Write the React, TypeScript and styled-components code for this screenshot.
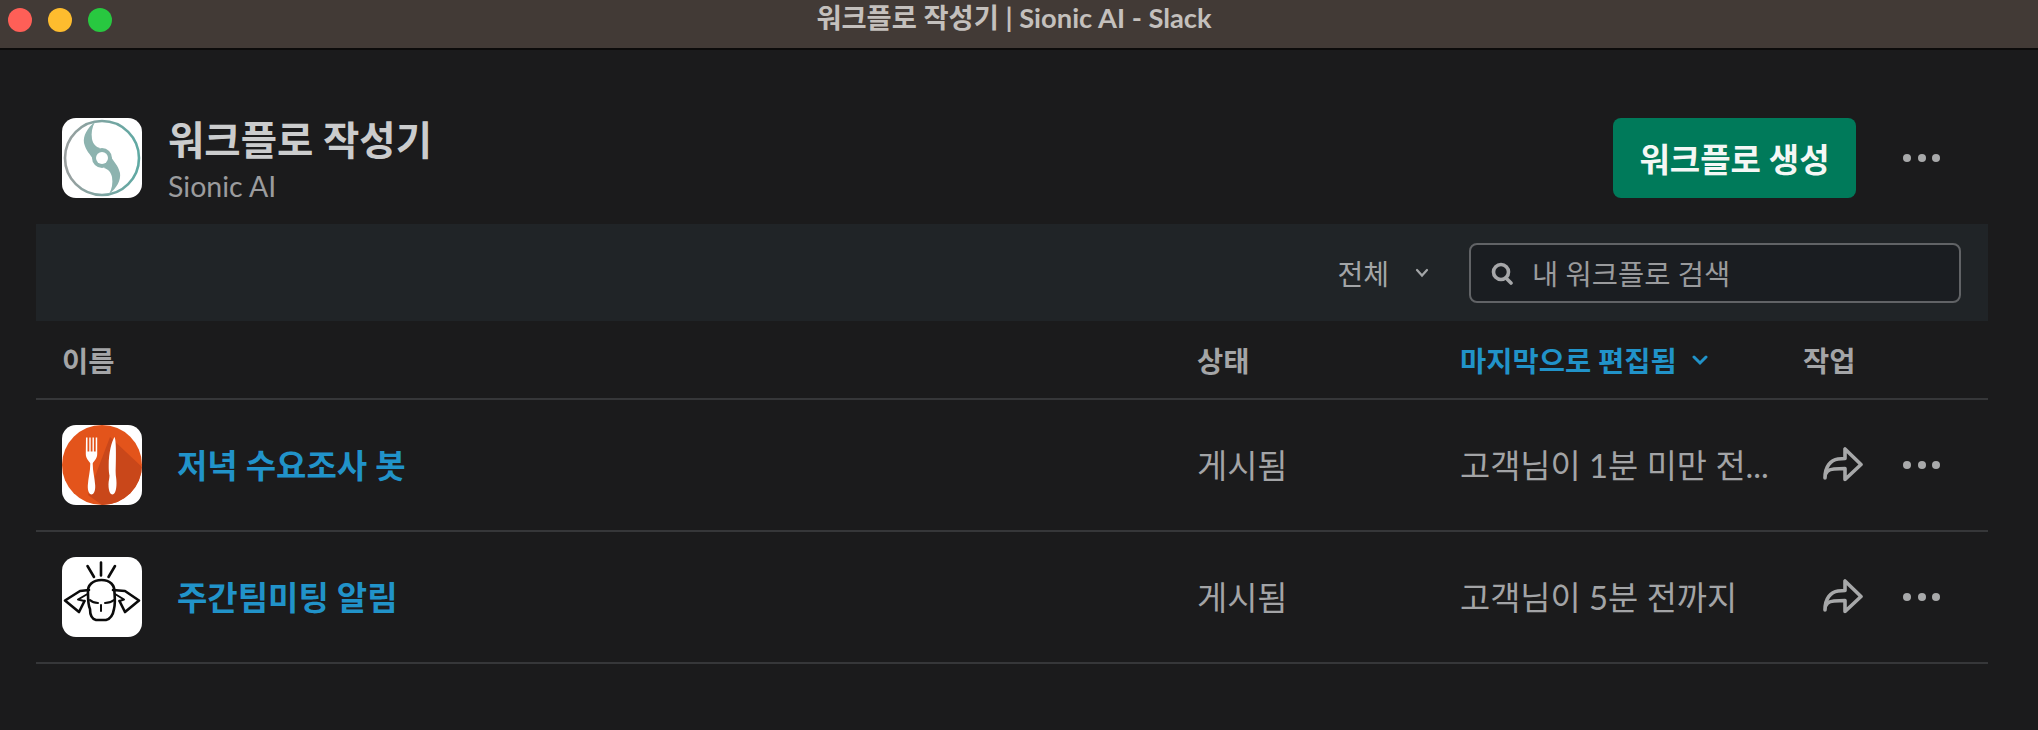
import React from "react";
import styled, { createGlobalStyle } from "styled-components";

const FONT = `Lato, "Noto Sans CJK KR", "Noto Sans", sans-serif`;

const Global = createGlobalStyle`
  html, body { margin: 0; padding: 0; background: #1b1b1c; }
  body { font-family: ${FONT}; width: 2038px; height: 730px; overflow: hidden; }
`;

const Window = styled.div`
  width: 2038px;
  height: 730px;
  display: flex;
  flex-direction: column;
  background: #1b1b1c;
`;

const TitleBar = styled.header`
  flex: none;
  display: grid;
  grid-template-columns: 1fr auto 1fr;
  align-items: center;
  padding: 0 18px 8px 8px;
  height: 40px;
  background: #423a36;
  border-bottom: 2px solid #0c0b0b;
`;

const Lights = styled.div`
  display: flex;
  gap: 16px;
`;

const Light = styled.span<{ $c: string }>`
  width: 24px;
  height: 24px;
  border-radius: 50%;
  background: ${(p) => p.$c};
`;

const WindowTitle = styled.div`
  font-size: 27.3px;
  font-weight: 700;
  color: #c4c0bd;
  line-height: 36px;
  margin-bottom: 4px;
`;

const Content = styled.main`
  padding: 68px 50px 0 36px;
  display: flex;
  flex-direction: column;
`;

const Top = styled.section`
  display: flex;
  align-items: center;
  height: 80px;
  padding: 0 0 26px 26px;
`;

const TitleBlock = styled.div`
  margin-left: 26px;
  padding-top: 7px;
  flex: 1;
  display: flex;
  flex-direction: column;
`;

const AppTitle = styled.h1`
  margin: 0;
  font-size: 39.5px;
  line-height: 44px;
  font-weight: 700;
  color: #cbcccd;
`;

const AppSub = styled.div`
  font-size: 28.5px;
  line-height: 40px;
  margin-top: 4px;
  color: #9b9c9e;
`;

const Primary = styled.button`
  width: 243px;
  height: 80px;
  border: 0;
  border-radius: 8px;
  background: #007a5a;
  color: #f4f7f5;
  font-family: ${FONT};
  font-size: 33px;
  font-weight: 700;
  padding: 0;
`;

const MoreBtn = styled.span<{ $ml: number }>`
  display: flex;
  gap: 6.5px;
  margin-left: ${(p) => p.$ml}px;
`;

const Dot = styled.i`
  width: 8px;
  height: 8px;
  border-radius: 50%;
  background: #a8a9aa;
`;

const TopEnd = styled.div`
  width: 48px;
  flex: none;
`;

const FilterBar = styled.section`
  height: 97px;
  display: flex;
  align-items: center;
  justify-content: flex-end;
  padding-right: 27px;
  background: #202427;
`;

const Filter = styled.div`
  display: flex;
  align-items: center;
  font-size: 28px;
  color: #a3a5a7;
  margin-right: 39px;
`;

const Chevron = styled.svg<{ $ml: number }>`
  margin-left: ${(p) => p.$ml}px;
`;

const Search = styled.div`
  width: 492px;
  height: 60px;
  box-sizing: border-box;
  display: flex;
  align-items: center;
  padding-left: 20px;
  border: 2px solid #616366;
  border-radius: 8px;
  background: #1a1d21;
  font-size: 28.5px;
  color: #9a9b9d;
`;

const SearchText = styled.span`
  margin-left: 19px;
`;

const Grid = styled.div`
  display: grid;
  grid-template-columns: 1135px 263px 343px 1fr;
  align-items: center;
  padding-left: 26px;
  border-bottom: 2px solid #363739;
`;

const HeadRow = styled(Grid)`
  height: 79px;
  box-sizing: border-box;
`;

const Row = styled(Grid)`
  height: 132px;
  box-sizing: border-box;
`;

const Th = styled.div<{ $blue?: boolean }>`
  font-size: 28.5px;
  font-weight: 700;
  display: flex;
  align-items: center;
  color: ${(p) => (p.$blue ? "#2193c9" : "#a4a5a7")};
`;

const NameCell = styled.div`
  display: flex;
  align-items: center;
`;

const NameLink = styled.a`
  margin: 0 0 3px 35px;
  font-size: 33px;
  font-weight: 700;
  color: #2193c9;
`;

const Cell = styled.div`
  font-size: 32.8px;
  color: #a3a4a6;
  white-space: nowrap;
  margin-bottom: 3px;
`;

const Actions = styled.div`
  display: flex;
  align-items: center;
  padding-left: 20px;
`;

const AppIcon = styled.svg`
  display: block;
  flex: none;
`;

const ARM =
  "M33 4C25 10 21 18 22 25C24 33 28 36 31 41L38 30C34 29 31 26 30 21C29 15 30 9 33 4Z";

const SwirlLogo = () => (
  <AppIcon width="80" height="80" viewBox="0 0 80 80">
    <defs>
      <linearGradient id="ring" x1="0" y1="0" x2="1" y2="0">
        <stop offset="0" stopColor="#9a9f9f" />
        <stop offset="1" stopColor="#5fa9a3" />
      </linearGradient>
    </defs>
    <rect width="80" height="80" rx="14" fill="#fff" />
    <circle cx="40" cy="40" r="37" fill="none" stroke="url(#ring)" strokeWidth="2.600" />
    <path d={ARM} fill="#8db3af" />
    <path d={ARM} fill="#8db3af" transform="rotate(180 40 40)" />
    <circle cx="40" cy="40" r="10" fill="#8db3af" />
    <circle cx="40" cy="40" r="6" fill="#fff" />
  </AppIcon>
);

const ForkLogo = () => (
  <AppIcon width="80" height="80" viewBox="0 0 80 80">
    <defs>
      <clipPath id="plate">
        <circle cx="40" cy="40" r="40" />
      </clipPath>
    </defs>
    <rect width="80" height="80" rx="14" fill="#fff" />
    <circle cx="40" cy="40" r="40" fill="#e3541b" />
    <path d="M48 12L80 42V80H40L26 70Z" fill="#c9471a" clipPath="url(#plate)" />
    <path
      d="M24 12.500h1.500v14h1.800v-14h1.400v14h1.800v-14h1.400v14h1.800v-14h1.500V29c0 5-3.500 7-4.500 9.500c0 8 2 14 2.500 22c.3 6-1.800 9-3.700 9s-4-3-3.700-9c.5-8 2.500-14 2.500-22c-1-2.500-4.500-4.500-4.500-9.500Z"
      fill="#fff"
    />
    <path
      d="M52.500 12c2 3 1.500 24 1.200 36c0 3 .8 5 .8 10c0 8-2 11.500-4 11.500s-4-3-4-10c0-4 1-6 1-9c-.5-3-.8-4.500-.8-10c0-13 3-24 5.800-28.500Z"
      fill="#fff"
    />
  </AppIcon>
);

const HeadLogo = () => (
  <AppIcon width="80" height="80" viewBox="0 0 80 80">
    <rect width="80" height="80" rx="14" fill="#fff" />
    <g fill="none" stroke="#0b0b0b" strokeWidth="2.600" strokeLinejoin="round" strokeLinecap="round">
      <path d="M39 5.500V18.500M25.500 9L32 20M53 9L46.500 20" />
      <path d="M26 36C25 28 31 23 39.500 23C48 23 53 28 52.500 36C53 42 53 48 52 52C51 58 48 62 44 63H34C30 62 28 58 28 52C26 48 26 42 26 36Z" />
      <path d="M27 33L18 34L3 43.500L17 55L22.500 44" />
      <path d="M25.500 37L16 42.500L22.500 44" strokeWidth="2" />
      <path d="M51 33L63 34L77 43.500L63 55L57.500 44" />
      <path d="M53 37L62 42.500L57.500 44" strokeWidth="2" />
      <path d="M28 43C30 45 33 46 36 46M43 46C46 46 49.500 45 52 43" strokeWidth="2" />
      <path d="M39 48V54" strokeWidth="2" />
    </g>
  </AppIcon>
);

const ShareIcon = () => (
  <svg width="40" height="36" viewBox="0 0 40 36" fill="none">
    <path
      d="M2 31C2 24 6 22.500 11 22L22 21.500V32.500L38 17.500L22 2V11.500L15 12C8 13 2 19 2 31Z"
      stroke="#a7a8a9"
      strokeWidth="3.600"
      strokeLinejoin="round"
      strokeLinecap="round"
    />
  </svg>
);

const SearchIcon = () => (
  <svg width="22" height="24" viewBox="0 0 22 24" fill="none">
    <circle cx="10" cy="11" r="7.500" stroke="#a6a7a9" strokeWidth="3.600" />
    <path d="M15 17L20 22" stroke="#a6a7a9" strokeWidth="3.600" strokeLinecap="round" />
  </svg>
);

const More = ({ ml }: { ml: number }) => (
  <MoreBtn $ml={ml}>
    <Dot />
    <Dot />
    <Dot />
  </MoreBtn>
);

const rows = [
  { name: "저녁 수요조사 봇", icon: <ForkLogo />, edited: "고객님이 1분 미만 전..." },
  { name: "주간팀미팅 알림", icon: <HeadLogo />, edited: "고객님이 5분 전까지" },
];

export default function App() {
  return (
    <Window>
      <Global />
      <TitleBar>
        <Lights>
          <Light $c="#ff5f57" />
          <Light $c="#febc2e" />
          <Light $c="#28c840" />
        </Lights>
        <WindowTitle>워크플로 작성기 | Sionic AI - Slack</WindowTitle>
      </TitleBar>
      <Content>
        <Top>
          <SwirlLogo />
          <TitleBlock>
            <AppTitle>워크플로 작성기</AppTitle>
            <AppSub>Sionic AI</AppSub>
          </TitleBlock>
          <Primary>워크플로 생성</Primary>
          <More ml={47} />
          <TopEnd />
        </Top>
        <FilterBar>
          <Filter>
            전체
            <Chevron $ml={25} width="16" height="12" viewBox="0 0 16 12" fill="none">
              <path d="M3 3L8 8.500L13 3" stroke="#a3a5a7" strokeWidth="2.200" strokeLinecap="round" />
            </Chevron>
          </Filter>
          <Search>
            <SearchIcon />
            <SearchText>내 워크플로 검색</SearchText>
          </Search>
        </FilterBar>
        <HeadRow>
          <Th>이름</Th>
          <Th>상태</Th>
          <Th $blue>
            마지막으로 편집됨
            <Chevron $ml={15} width="16" height="12" viewBox="0 0 16 12" fill="none">
              <path d="M2 3L8 9L14 3" stroke="#2193c9" strokeWidth="3" strokeLinecap="round" />
            </Chevron>
          </Th>
          <Th>작업</Th>
        </HeadRow>
        {rows.map((r) => (
          <Row key={r.name}>
            <NameCell>
              {r.icon}
              <NameLink>{r.name}</NameLink>
            </NameCell>
            <Cell>게시됨</Cell>
            <Cell>{r.edited}</Cell>
            <Actions>
              <ShareIcon />
              <More ml={40} />
            </Actions>
          </Row>
        ))}
      </Content>
    </Window>
  );
}
